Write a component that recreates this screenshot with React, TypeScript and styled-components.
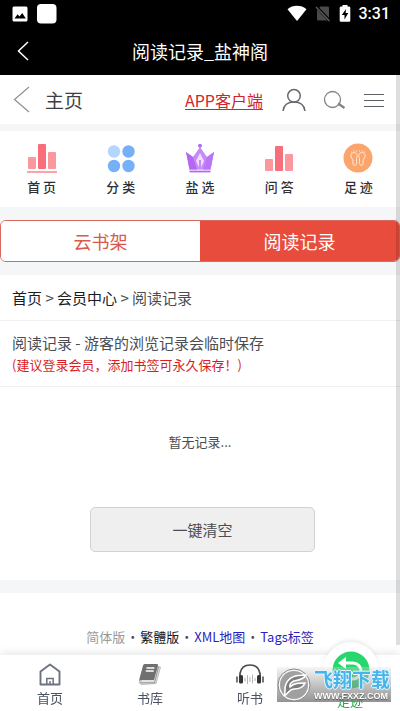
import React from "react";
import styled, { createGlobalStyle } from "styled-components";

const Global = createGlobalStyle`
  * { box-sizing: border-box; }
  body {
    margin: 0;
    background: #fff;
    color: #4a4d52;
    font-family: "Noto Sans CJK SC", "Noto Sans", sans-serif;
    font-size: 15px;
  }
  a { color: inherit; text-decoration: none; }
  button { font: inherit; color: inherit; cursor: pointer; }
  svg { display: block; flex: none; }
`;

const Screen = styled.div`
  position: relative;
  display: flex;
  flex-direction: column;
  min-height: 100vh;
`;

const StatusBar = styled.div`
  display: flex;
  align-items: center;
  justify-content: space-between;
  height: 27px;
  padding: 0 10px 0 12px;
  background: #000;
  color: #fff;
  font: 500 16px/20px Roboto, sans-serif;
`;

const Cluster = styled.div<{ $gap: number }>`
  display: flex;
  align-items: center;
  gap: ${(p) => p.$gap}px;
`;

const TitleBar = styled.header`
  display: grid;
  grid-template-columns: 46px 1fr 46px;
  align-items: center;
  height: 48px;
  background: #000;
  color: #fff;
`;

const Title = styled.h1`
  margin: 0;
  font-size: 18px;
  font-weight: 400;
  line-height: 28px;
  text-align: center;
`;

const IconButton = styled.button`
  display: flex;
  align-items: center;
  justify-content: center;
  padding: 0;
  border: 0;
  background: none;
`;

const Content = styled.main`
  background: #f5f6f8;
`;

const Toolbar = styled.div`
  display: flex;
  align-items: center;
  justify-content: space-between;
  height: 49px;
  padding: 0 16px 0 13px;
  background: #fff;
`;

const HomeLink = styled.a`
  font-size: 19px;
  line-height: 28px;
  color: #3c3f44;
`;

const AppLink = styled.a`
  margin-right: 2px;
  && {
    color: #d0242a;
    text-decoration: underline;
    text-underline-offset: 2px;
  }
  font-size: 16px;
  line-height: 24px;
`;

const Menu = styled.nav`
  display: grid;
  grid-template-columns: repeat(5, 1fr);
  height: 76px;
  margin-top: 7px;
  padding: 12px 2px 0;
  background: #fff;
`;

const MenuItem = styled.a`
  display: flex;
  flex-direction: column;
  align-items: center;
  gap: 4px;
  font-size: 13px;
  font-weight: 500;
  line-height: 20px;
  && { color: #2c2f35; }
`;

const Tabs = styled.div`
  display: grid;
  grid-template-columns: 1fr 1fr;
  height: 42px;
  margin: 13px 0;
  overflow: hidden;
  border: 1px solid #d9695f;
  border-radius: 6px;
  background: #fff;
`;

const Tab = styled.button<{ $active?: boolean }>`
  padding: 0;
  border: 0;
  background: ${(p) => (p.$active ? "#e74c3c" : "#fff")};
  && {
    color: ${(p) => (p.$active ? "#fff" : "#d9594c")};
    font-size: 18px;
  }
`;

const Panel = styled.section`
  background: #fff;
`;

const Breadcrumb = styled.nav`
  height: 46px;
  padding: 11px 12px;
  border-bottom: 1px solid #f0f0f1;
  line-height: 24px;
  a { color: #1b1c1e; }
`;

const Notice = styled.div`
  height: 66px;
  padding: 10px 12px;
  border-bottom: 1px solid #f0f0f1;
`;

const NoticeTitle = styled.p`
  margin: 0;
  line-height: 24px;
`;

const NoticeHint = styled.p`
  margin: 0;
  font-size: 13px;
  line-height: 20px;
  color: #d81e22;
`;

const Empty = styled.p`
  margin: 0;
  padding: 45px 0 55px;
  font-size: 13px;
  line-height: 20px;
  text-align: center;
`;

const ClearRow = styled.div`
  display: flex;
  justify-content: center;
  padding: 0 0 28px 5px;
`;

const ClearButton = styled.button`
  width: 57%;
  height: 45px;
  border: 1px solid #d2d2d3;
  border-radius: 5px;
  background: #efefef;
`;

const Footer = styled.footer`
  display: flex;
  justify-content: center;
  gap: 1px;
  margin-top: 13px;
  padding: 34px 0 20px;
  background: #fff;
  font-size: 13px;
  line-height: 20px;
`;

const FooterLink = styled.a<{ $color: string }>`
  && { color: ${(p) => p.$color}; }
`;

const ScrollTrack = styled.div`
  position: absolute;
  top: 75px;
  right: 0;
  bottom: 66px;
  width: 4px;
  background: rgba(0, 0, 0, 0.13);
`;

const BottomNav = styled.nav`
  position: fixed;
  right: 0;
  bottom: 0;
  left: 0;
  display: grid;
  grid-template-columns: repeat(4, 1fr);
  height: 56px;
  background: #fff;
  box-shadow: 0 -2px 8px rgba(0, 0, 0, 0.1);
`;

const NavItem = styled.a<{ $active?: boolean }>`
  position: relative;
  display: flex;
  flex-direction: column;
  align-items: center;
  justify-content: flex-end;
  gap: 2px;
  padding-bottom: ${(p) => (p.$active ? 0 : 3)}px;
  font-size: 13px;
  line-height: 20px;
  && { color: ${(p) => (p.$active ? "#27a844" : "#4b5262")}; }
`;

const Bubble = styled.span`
  position: absolute;
  top: -13px;
  left: 50%;
  display: flex;
  align-items: center;
  justify-content: center;
  width: 56px;
  height: 56px;
  margin-left: -27px;
  border-radius: 50%;
  background: #fff;
  box-shadow: 0 -3px 5px -2px rgba(0, 0, 0, 0.12);
`;

const Watermark = styled.div`
  position: fixed;
  right: 9px;
  bottom: 9px;
  display: flex;
  align-items: center;
  gap: 3px;
  width: 114px;
  height: 35px;
  background: linear-gradient(rgba(225, 225, 225, 0.3), rgba(120, 120, 120, 0.8));
`;

const MarkText = styled.div`
  display: flex;
  flex-direction: column;
  align-items: flex-start;
  white-space: nowrap;
`;

const MarkName = styled.span`
  font-size: 19px;
  font-weight: 700;
  line-height: 22px;
  color: #45b4ec;
  text-shadow: 1px 0 #e6f5fd, -1px 0 #e6f5fd, 0 1px #e6f5fd, 0 -1px #e6f5fd;
`;

const MarkSite = styled.span`
  font: 700 9px/12px "Liberation Sans", sans-serif;
  color: #fff;
  text-shadow: 0 1px 1px #555;
`;

const PictureIcon = () => (
  <svg width="16" height="16" viewBox="0 0 16 16">
    <rect x="0.5" y="0.5" width="15" height="15" rx="1.5" fill="#fff" />
    <path d="M2.5 12.5 5.6 8.3l1.9 2.1L10.2 7l3.6 5.500z" fill="#000" />
  </svg>
);

const BlankIcon = () => (
  <svg width="20" height="20" viewBox="0 0 20 20">
    <rect width="19.500" height="19.500" rx="4" fill="#fff" />
  </svg>
);

const WifiIcon = () => (
  <svg width="20" height="17" viewBox="0 0 20 17">
    <path d="M10 16 .5 4.300C5.500-.3 14.500-.3 19.500 4.300z" fill="#fff" />
  </svg>
);

const NoSimIcon = () => (
  <svg width="16" height="17" viewBox="0 0 16 17">
    <path d="M5.500 1.500H13a1 1 0 0 1 1 1v12a1 1 0 0 1-1 1H3a1 1 0 0 1-1-1V5z" fill="#4a4a4a" />
    <path d="m1 1.500 13.500 14" stroke="#000" strokeWidth="3" />
    <path d="m1 2 13.500 14" stroke="#606060" strokeWidth="1.300" />
  </svg>
);

const BatteryIcon = () => (
  <svg width="12" height="18" viewBox="0 0 12 18">
    <path d="M3.500 1.500V0h5v1.500H10A1.300 1.300 0 0 1 11.300 3v12.500a1.300 1.300 0 0 1-1.300 1.300H2A1.300 1.300 0 0 1 .7 15.500V3A1.300 1.300 0 0 1 2 1.500z" fill="#fff" />
    <path d="M7 4 2.800 10h2.700v4.500L9.300 8H6.700z" fill="#000" />
  </svg>
);

const Back = ({ width, height, color, stroke }: { width: number; height: number; color: string; stroke: number }) => (
  <svg width={width} height={height} viewBox={`0 0 ${width} ${height}`} fill="none" stroke={color} strokeWidth={stroke}>
    <path d={`M${width - 1} 1 1.500 ${height / 2} ${width - 1} ${height - 1}`} />
  </svg>
);

const UserIcon = () => (
  <svg width="24" height="24" viewBox="0 0 24 24" fill="none" stroke="#66696d" strokeWidth="1.500">
    <circle cx="12" cy="7.800" r="6.300" />
    <path d="M1 23c.7-5.500 4.500-9 11-9s10.300 3.500 11 9" />
  </svg>
);

const SearchIcon = () => (
  <svg width="24" height="20" viewBox="0 0 24 20" fill="none" stroke="#808387">
    <circle cx="9.500" cy="9.500" r="8" strokeWidth="1.300" />
    <path d="m15 13.500 6.500 4.500" strokeWidth="2.200" />
  </svg>
);

const MenuIcon = () => (
  <svg width="20" height="14" viewBox="0 0 20 14" stroke="#5d6064" strokeWidth="1">
    <path d="M0 1.500h20M0 7.500h20M0 13.500h20" />
  </svg>
);

const BarsIcon = ({ base }: { base?: boolean }) => (
  <svg width="30" height="30" viewBox="0 0 30 30">
    <g transform={base ? undefined : "translate(0 2)"}>
      <rect x="1" y="14" width="8" height="12" rx="1" fill="#fb989d" />
      <rect x="11" y="1" width="8" height="25" rx="1" fill="#f66f7a" />
      <rect x="21" y="9" width="8" height="17" rx="1" fill="#fb989d" />
    </g>
    {base && <path d="M0 29h30" stroke="#f8858d" strokeWidth="1.500" />}
  </svg>
);

const DotsIcon = () => (
  <svg width="30" height="30" viewBox="0 0 30 30" fill="#75b0f8">
    <circle cx="8" cy="8.500" r="6.200" fill="#b4d5fd" />
    <circle cx="22.500" cy="8.500" r="6.200" />
    <circle cx="8" cy="23" r="6.200" />
    <circle cx="22.500" cy="23" r="6.200" />
  </svg>
);

const CrownIcon = () => (
  <svg width="30" height="30" viewBox="0 0 30 30">
    <path d="m1 9 7 5 7-10 7 10 7-5-3.500 17.500h-21z" fill="#c58bf8" />
    <path d="M1 9 8 14l4 12.500H4.500z" fill="#b466f5" />
    <path d="m29 9-7 5-4 12.500h7.500z" fill="#b975f5" />
    <circle cx="15" cy="2.700" r="2" fill="#b46af5" />
    <path d="m15 10-4 8 3 6.500V17h2v7.500l3-6.500z" fill="#f1ddff" />
    <path d="M4.500 28.500h21" stroke="#b466f5" strokeWidth="1.800" />
  </svg>
);

const FeetIcon = () => (
  <svg width="30" height="30" viewBox="0 0 30 30" fill="none" stroke="#ffeadb" strokeWidth="1">
    <circle cx="15" cy="15" r="14.500" fill="#fba56c" stroke="none" />
    <path d="M8 11.500c1-2.500 5-2.500 6 0 .9 2-1 3.500-.5 5.500.5 2.500 0 5-1.500 5.500-2 .2-2.200-2-2-4C10.300 16 7 14 8 11.500zM22 11.500c-1-2.500-5-2.500-6 0-.9 2 1 3.500.5 5.500-.5 2.500 0 5 1.500 5.500 2 .2 2.200-2 2-4-.3-2.500 3-4.500 2-7z" />
    <path d="M8 9h1M10.500 8h1M13 8h1M16 8h1M18.500 8h1M21 9h1" />
  </svg>
);

const HouseIcon = () => (
  <svg width="22" height="23" viewBox="0 0 22 23" fill="none" stroke="#6c7280" strokeWidth="1.900">
    <path d="M1.500 21.500V8.500L11 1.500l9.500 7v13z" strokeLinejoin="round" />
    <path d="M7.800 21v-5.500h6.400V21M11 18v3" strokeWidth="1.500" />
  </svg>
);

const BookIcon = () => (
  <svg width="24" height="23" viewBox="0 0 24 23">
    <path d="M20 3.500 22.500 4 18 20.500 3 21.500 1 19.500z" fill="#e3e3e3" stroke="#bcbcbc" />
    <path d="M6.500 1h12.500q1.500 0 1 1.500L16 17H3.500q-2 0-2 2-.5-1.500 0-3.500L5 2.500Q5.500 1 6.500 1z" fill="#707071" />
    <path d="M8.500 5h8M7.800 8h8" stroke="#fff" strokeWidth="1.500" />
    <path d="M2 19.800h14.500L20.500 4" fill="none" stroke="#919191" />
  </svg>
);

const HeadphonesIcon = () => (
  <svg width="30" height="23" viewBox="0 0 30 23" fill="none">
    <path d="M5 14V10.500C6 4.500 10 2 15 2s9 2.500 10 8.500V14" stroke="#4b4b4d" strokeWidth="1.700" />
    <rect x="4" y="12" width="4" height="8.500" rx="1.500" fill="#333" />
    <rect x="22" y="12" width="4" height="8.500" rx="1.500" fill="#333" />
    <path d="M2 13.500v6M28 13.500v6" stroke="#77777a" strokeWidth="2" />
    <path d="M10 14.500v4M12.500 12v9M15 14v5M17.500 11.500v9M20 15v3" stroke="#b5b5b5" />
  </svg>
);

const ReturnIcon = () => (
  <svg width="38" height="38" viewBox="0 0 38 38" fill="none">
    <circle cx="19" cy="19" r="18.500" fill="#27d76d" />
    <path d="M11 12h10a8 8 0 0 1 0 16h-8" stroke="#fff" strokeWidth="3" />
    <path d="m14 6-8 6 8 6z" fill="#fff" />
  </svg>
);

const SiteEmblem = () => (
  <svg width="34" height="34" viewBox="0 0 34 34">
    <circle cx="17" cy="17" r="16" fill="#f7f7f7" stroke="#858585" strokeWidth="1" />
    <circle cx="17" cy="17" r="14" fill="#a0a0a0" />
    <path d="M7 28c2-3 0-8 2-12C12 9 18 7 29 7c-3 5-8 5-12 6-3 1-5 4-4 6 4-4 9-4 15-4-2 5-7 6-11 6-5 0-5 4-10 7z" fill="#7d7d7d" stroke="#fff" strokeWidth="1.600" />
  </svg>
);

const menu = [
  { label: "首 页", icon: <BarsIcon base /> },
  { label: "分 类", icon: <DotsIcon /> },
  { label: "盐 选", icon: <CrownIcon /> },
  { label: "问 答", icon: <BarsIcon /> },
  { label: "足 迹", icon: <FeetIcon /> },
];

export default function App() {
  return (
    <Screen>
      <Global />
      <StatusBar>
        <Cluster $gap={9}>
          <PictureIcon />
          <BlankIcon />
        </Cluster>
        <Cluster $gap={8}>
          <WifiIcon />
          <NoSimIcon />
          <BatteryIcon />
          <span>3:31</span>
        </Cluster>
      </StatusBar>
      <TitleBar>
        <IconButton aria-label="返回">
          <Back width={12} height={20} color="#fff" stroke={1.5} />
        </IconButton>
        <Title>阅读记录_盐神阁</Title>
      </TitleBar>

      <Content>
        <Toolbar>
          <Cluster $gap={15}>
            <IconButton aria-label="后退">
              <Back width={17} height={27} color="#929497" stroke={1.3} />
            </IconButton>
            <HomeLink href="#home">主页</HomeLink>
          </Cluster>
          <Cluster $gap={17}>
            <AppLink href="#app">APP客户端</AppLink>
            <IconButton aria-label="用户"><UserIcon /></IconButton>
            <IconButton aria-label="搜索"><SearchIcon /></IconButton>
            <IconButton aria-label="菜单"><MenuIcon /></IconButton>
          </Cluster>
        </Toolbar>

        <Menu>
          {menu.map((item) => (
            <MenuItem href="#menu" key={item.label}>
              {item.icon}
              <span>{item.label}</span>
            </MenuItem>
          ))}
        </Menu>

        <Tabs>
          <Tab>云书架</Tab>
          <Tab $active>阅读记录</Tab>
        </Tabs>

        <Panel>
          <Breadcrumb>
            <a href="#home">首页</a> &gt; <a href="#member">会员中心</a> &gt; 阅读记录
          </Breadcrumb>
          <Notice>
            <NoticeTitle>阅读记录 - 游客的浏览记录会临时保存</NoticeTitle>
            <NoticeHint>(建议登录会员，添加书签可永久保存！)</NoticeHint>
          </Notice>
          <Empty>暂无记录...</Empty>
          <ClearRow>
            <ClearButton>一键清空</ClearButton>
          </ClearRow>
        </Panel>
      </Content>

      <Content as="div">
        <Footer>
          <FooterLink href="#hans" $color="#999">简体版</FooterLink>
          <span>·</span>
          <FooterLink href="#hant" $color="#17181a">繁體版</FooterLink>
          <span>·</span>
          <FooterLink href="#xml" $color="#2a1fc0">XML地图</FooterLink>
          <span>·</span>
          <FooterLink href="#tags" $color="#2a1fc0">Tags标签</FooterLink>
        </Footer>
      </Content>
      <ScrollTrack />

      <BottomNav>
        <NavItem href="#home"><HouseIcon />首页</NavItem>
        <NavItem href="#library"><BookIcon />书库</NavItem>
        <NavItem href="#listen"><HeadphonesIcon />听书</NavItem>
        <NavItem href="#history" $active>
          <Bubble><ReturnIcon /></Bubble>
          <span>足迹</span>
        </NavItem>
      </BottomNav>

      <Watermark>
        <SiteEmblem />
        <MarkText>
          <MarkName>飞翔下载</MarkName>
          <MarkSite>WWW.FXXZ.COM</MarkSite>
        </MarkText>
      </Watermark>
    </Screen>
  );
}
